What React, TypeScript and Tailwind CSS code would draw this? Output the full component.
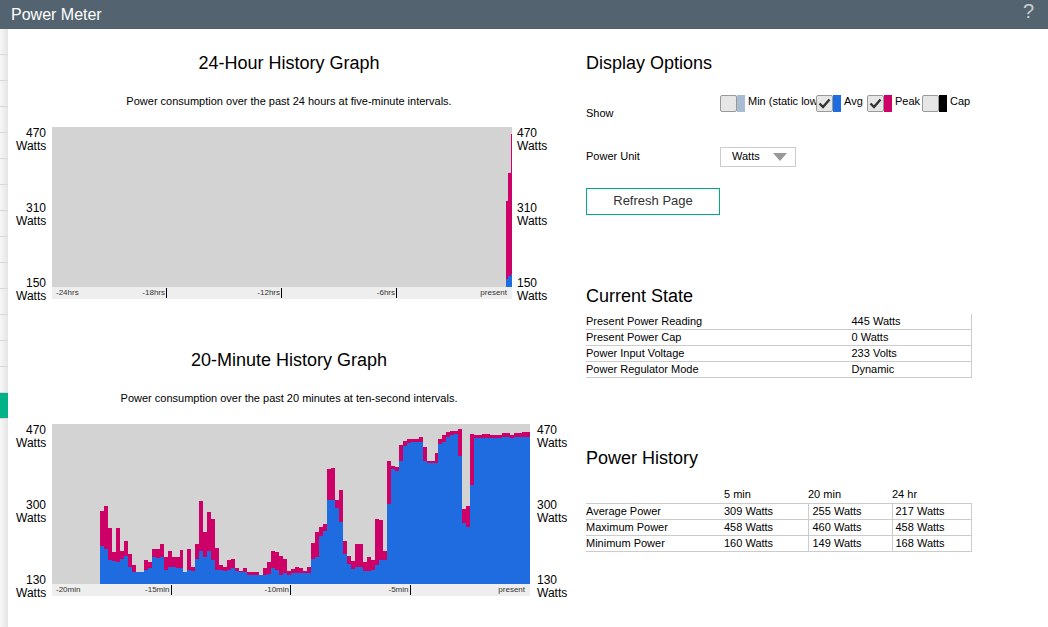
import React from "react";

const raw: [number, number][] = [
[292,396],[276,405],[342,437],[413,440],[342,443],[412,435],[381,425],[421,460],[453,473],[475,475],
[475,475],[438,467],[443,463],[405,430],[405,433],[390,430],[430,467],[411,460],[430,460],[430,461],
[407,462],[475,475],[406,467],[460,472],[390,436],[262,411],[355,430],[295,411],[316,437],[403,467],
[453,467],[460,472],[438,467],[436,463],[462,472],[470,475],[462,475],[475,482],[475,482],[475,483],
[483,484],[462,484],[445,481],[411,462],[413,467],[425,482],[435,478],[470,482],[465,477],[458,477],
[462,477],[470,477],[460,477],[387,435],[355,428],[340,365],[330,352],[165,258],[162,258],[258,283],
[228,323],[381,420],[425,450],[440,466],[390,458],[390,460],[443,472],[430,472],[437,468],[315,453],
[318,437],[410,437],[142,270],[155,165],[160,170],[93,142],[80,95],[75,88],[75,85],[75,85],
[70,85],[100,140],[142,148],[142,148],[118,148],[75,90],[62,85],[55,70],[52,63],[52,60],
[45,125],[285,328],[276,340],[60,212],[62,72],[62,72],[60,72],[60,72],[62,72],[62,72],
[62,72],[58,68],[58,68],[62,72],[58,68],[58,70],[55,70],[55,70],
];

const FONT = { fontFamily: '"Liberation Sans", Arial, sans-serif' };

function YLabels({ vals, align }: { vals: string[]; align: "left" | "right" }) {
  return (
    <div className={`flex flex-col justify-between h-[176px] text-[12px] leading-[13px] text-black ${align === "right" ? "text-right w-[30px]" : "text-left w-[32px]"}`}>
      {vals.map((v) => (
        <div key={v}>{v}<br />Watts</div>
      ))}
    </div>
  );
}

function Tick({ l }: { l: string }) {
  return (
    <span className="flex items-center gap-[1px]">{l}<span className="inline-block w-[1px] h-[10px] bg-black" /></span>
  );
}

function Axis({ labels }: { labels: string[] }) {
  return (
    <div className="h-[12px] bg-[#eeeeee] grid grid-cols-4 text-[8px] leading-[12px] text-[#333]">
      <div className="flex justify-between pl-[4px]"><span>{labels[0]}</span><Tick l={labels[1]} /></div>
      <div className="flex justify-end"><Tick l={labels[2]} /></div>
      <div className="flex justify-end"><Tick l={labels[3]} /></div>
      <div className="flex justify-end pr-[5px]"><span>{labels[4]}</span></div>
    </div>
  );
}

function Chart20() {
  const bars: [number, number][] = [];
  for (let i = 0; i < 12; i++) bars.push([510, 510]);
  for (const b of raw) bars.push(b);
  while (bars.length < 120) bars.push([55, 70]);
  return (
    <div className="h-[160px] bg-[#d3d3d3] flex items-end">
      {bars.map(([p, a], i) => {
        const ph = (510 - p) / 3;
        const ah = (510 - a) / 3;
        return (
          <div key={i} className="flex-1 flex flex-col justify-end h-full">
            <div className="bg-[#cc0066]" style={{ height: Math.max(0, ph - ah) }} />
            <div className="bg-[#1e6ce0]" style={{ height: ah }} />
          </div>
        );
      })}
    </div>
  );
}

function Chart24() {
  return (
    <div className="h-[160px] bg-[#d3d3d3] flex items-end justify-end">
      <div className="w-[2px] flex flex-col justify-end h-full">
        <div className="bg-[#cc0066] h-[78px]" />
        <div className="bg-[#1e6ce0] h-[8px]" />
      </div>
      <div className="w-[3px] flex flex-col justify-end h-full">
        <div className="bg-[#cc0066] h-[103px]" />
        <div className="bg-[#1e6ce0] h-[11px]" />
      </div>
      <div className="w-[1px] flex flex-col justify-end h-full">
        <div className="bg-[#cc0066] h-[140px]" />
        <div className="bg-[#1e6ce0] h-[13px]" />
      </div>
    </div>
  );
}

function Check({ color, checked, label, w }: { color: string; checked: boolean; label: string; w: string }) {
  return (
    <div className={`flex items-start ${w}`}>
      <div className="flex h-[17px]">
        <div className="w-[17px] h-[17px] bg-[#e6e6e6] border border-[#999] rounded-[2px] flex items-center justify-center">
          {checked && (
            <svg width="13" height="11" viewBox="0 0 13 11"><path d="M1.5 5.5 L5 9 L11.5 1.5" stroke="#333" strokeWidth="2.4" fill="none" /></svg>
          )}
        </div>
        <div className={`w-[8px] h-[17px] ${color}`} />
      </div>
      <span className="text-[11px] leading-[13px] ml-[3px] whitespace-nowrap">{label}</span>
    </div>
  );
}

export default function App() {
  const rows = Array.from({ length: 15 });
  return (
    <div className="w-[1048px] h-[627px] bg-white overflow-hidden text-black" style={FONT}>
      <div className="h-[29px] bg-[#536470] flex items-center justify-between pl-[11px] pr-[14px]">
        <span className="text-white text-[16px]">Power Meter</span>
        <span className="text-[#c9d0d5] text-[20px] leading-none -mt-[8px]">?</span>
      </div>
      <div className="flex h-[598px]">
        <div className="w-[8px] bg-gradient-to-r from-[#f7f7f7] to-[#e4e4e4] flex flex-col">
          {rows.map((_, i) => (
            <div key={i} className={`h-[26px] border-b border-[#d8d8d8] ${i === 14 ? "bg-[#00b386]" : ""}`} />
          ))}
        </div>
        <div className="w-[562px] flex flex-col">
          <div className="text-center text-[18px] mt-[23px] leading-[22px]">24-Hour History Graph</div>
          <div className="text-center text-[11px] mt-[21px] leading-[13px]">Power consumption over the past 24 hours at five-minute intervals.</div>
          <div className="flex mt-[19px] ml-[8px]">
            <YLabels vals={["470", "310", "150"]} align="right" />
            <div className="w-[460px] ml-[6px]">
              <Chart24 />
              <Axis labels={["-24hrs", "-18hrs", "-12hrs", "-6hrs", "present"]} />
            </div>
            <div className="ml-[5px]"><YLabels vals={["470", "310", "150"]} align="left" /></div>
          </div>
          <div className="text-center text-[18px] mt-[46px] leading-[22px]">20-Minute History Graph</div>
          <div className="text-center text-[11px] mt-[21px] leading-[13px]">Power consumption over the past 20 minutes at ten-second intervals.</div>
          <div className="flex mt-[19px] ml-[8px]">
            <YLabels vals={["470", "300", "130"]} align="right" />
            <div className="w-[478px] ml-[6px]">
              <Chart20 />
              <Axis labels={["-20min", "-15min", "-10min", "-5min", "present"]} />
            </div>
            <div className="ml-[7px]"><YLabels vals={["470", "300", "130"]} align="left" /></div>
          </div>
        </div>
        <div className="ml-[16px] w-[386px] flex flex-col">
          <div className="text-[18px] mt-[23px] leading-[22px]">Display Options</div>
          <div className="flex mt-[21px]">
            <div className="w-[134px] text-[11px] pt-[10px]">Show</div>
            <div className="flex">
              <Check color="bg-[#aabbd4]" checked={false} label="Min (static low)" w="w-[96px]" />
              <Check color="bg-[#1e6ce0]" checked label="Avg" w="w-[51px]" />
              <Check color="bg-[#cc0066]" checked label="Peak" w="w-[55px]" />
              <Check color="bg-black" checked={false} label="Cap" w="w-[50px]" />
            </div>
          </div>
          <div className="flex items-center mt-[25px]">
            <div className="w-[134px] text-[11px]">Power Unit</div>
            <div className="w-[76px] h-[20px] border border-[#ccc] flex items-center justify-between pl-[11px] pr-[8px] text-[11px]">
              <span>Watts</span>
              <svg width="14" height="8" viewBox="0 0 14 8"><path d="M0 0 H14 L7 8 Z" fill="#999" /></svg>
            </div>
          </div>
          <button className="mt-[21px] w-[134px] h-[27px] border border-[#01a982] text-[13px] text-[#333] bg-white">Refresh Page</button>
          <div className="text-[18px] mt-[70px] leading-[22px]">Current State</div>
          <table className="mt-[7px] w-[386px] text-[11px] border-collapse">
            <tbody>
              {[["Present Power Reading", "445 Watts"], ["Present Power Cap", "0 Watts"], ["Power Input Voltage", "233 Volts"], ["Power Regulator Mode", "Dynamic"]].map(([a, b]) => (
                <tr key={a} className="h-[16px] border-b border-[#ccc]">
                  <td className="p-0 leading-[15px] align-bottom">{a}</td>
                  <td className="p-0 leading-[15px] w-[120px] border-r border-[#ccc] align-top">{b}</td>
                </tr>
              ))}
            </tbody>
          </table>
          <div className="text-[18px] mt-[69px] leading-[22px]">Power History</div>
          <table className="mt-[17px] w-[386px] text-[11px] border-collapse">
            <tbody>
              <tr className="h-[15px] border-b border-[#ccc]">
                <td className="p-0 w-[138px]"></td>
                <td className="p-0 w-[84px]">5 min</td>
                <td className="p-0 w-[84px]">20 min</td>
                <td className="p-0">24 hr</td>
              </tr>
              {[["Average Power", "309 Watts", "255 Watts", "217 Watts"], ["Maximum Power", "458 Watts", "460 Watts", "458 Watts"], ["Minimum Power", "160 Watts", "149 Watts", "168 Watts"]].map((r) => (
                <tr key={r[0]} className="h-[16px] border-b border-[#ccc]">
                  <td className="p-0 leading-[15px] align-bottom">{r[0]}</td>
                  <td className="p-0 leading-[15px] border-r border-[#ccc] align-top">{r[1]}</td>
                  <td className="p-0 pl-[4px] leading-[15px] border-r border-[#ccc] align-top">{r[2]}</td>
                  <td className="p-0 pl-[3px] leading-[15px] border-r border-[#ccc] align-top">{r[3]}</td>
                </tr>
              ))}
            </tbody>
          </table>
        </div>
      </div>
    </div>
  );
}
